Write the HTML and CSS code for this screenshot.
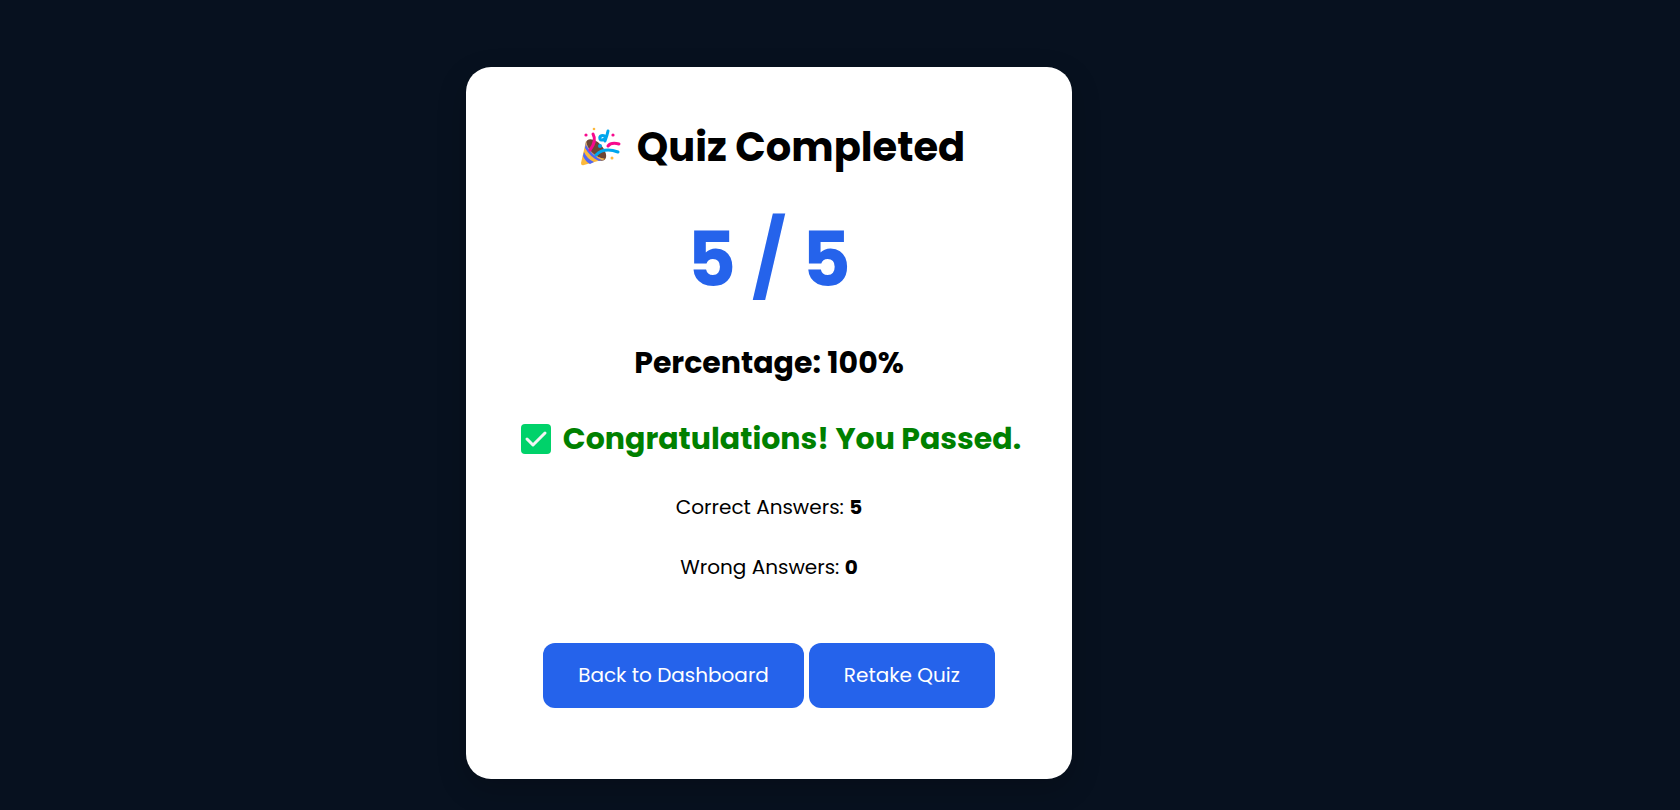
FILE: index.html
```html
<!DOCTYPE html>
<html lang="en">
<head>
  <meta charset="UTF-8" />
  <meta name="viewport" content="width=device-width, initial-scale=1.0" />
  <title>Quiz Result</title>
  <link rel="stylesheet" href="styles.css">
</head>
<body>
  <main class="result-card">
    <h1>
      <svg class="icon-party" viewBox="0 0 40 40" aria-hidden="true">
        <ellipse cx="15" cy="23" rx="13" ry="7" transform="rotate(48 15 23)" fill="#6d4534" />
        <path d="M5 14 L0 36 Q0 39 3 38 L24 32 C15 31 6 23 5 14Z" fill="#fcb93c" />
        <path d="M5 15 L4 21 Q9 30 18 34 L23 32 C15 31 7 23 5 15Z" fill="#4f66f5" />
        <path d="M5 15 L5 18 Q11 29 21 33 L24 32 C15 31 7 24 5 15Z" fill="#fcb93c" />
        <path d="M3 25 Q6 32 13 35 L9 37 Q4 34 2 29Z" fill="#4f66f5" />
        <path d="M12 7 Q16 14 9 23" class="streamer pink" />
        <path d="M27 4 Q26 9 24 14 M25 10 C22 7 18 9 19 12 C20 14 24 13 25 9" class="streamer blue" />
        <path d="M27 19 Q30 15 38 17" class="streamer pink" />
        <path d="M15 28 Q23 20 37 25" class="streamer blue" />
        <circle cx="19" cy="19" r="2" fill="#00a6ed" />
        <circle cx="5" cy="8" r="1.6" fill="#f70a8d" />
        <circle cx="32" cy="8" r="1.6" fill="#f70a8d" />
        <circle cx="13" cy="2" r="1.3" fill="#fcb93c" />
        <circle cx="31" cy="31" r="1.5" fill="#fcb93c" />
      </svg>
      Quiz Completed
    </h1>

    <div class="score">5 / 5</div>

    <h2>Percentage: 100%</h2>

    <h2 class="pass">
      <svg class="icon-check" viewBox="0 0 30 30" aria-hidden="true">
        <rect width="30" height="30" rx="4" fill="#00d26a" />
        <path d="M6 15 L12 21 L24 9" />
      </svg>
      Congratulations! You Passed.
    </h2>

    <p>Correct Answers: <b>5</b></p>
    <p>Wrong Answers: <b>0</b></p>

    <div class="actions">
      <a href="#dashboard" class="btn">Back to Dashboard</a>
      <a href="#quiz" class="btn">Retake Quiz</a>
    </div>
  </main>
</body>
</html>
```
FILE: styles.css
```css
* {
  margin: 0;
  padding: 0;
  box-sizing: border-box;
}

body {
  font-family: Poppins, Inter, sans-serif;
  background: #07111f;
  color: #000;
  min-height: 100vh;
  padding: 67px 142px 31px 0;
}

.result-card {
  width: 606px;
  max-width: 100%;
  margin: 0 auto;
  padding: 50px 40px 71px;
  background: #fff;
  border-radius: 25px;
  box-shadow: 0 10px 30px rgba(0, 0, 0, 0.2);
  text-align: center;
}

h1,
h2 {
  display: flex;
  align-items: center;
  justify-content: center;
}

h1 {
  gap: 16px;
  font-size: 40px;
  line-height: 60px;
}

h2 {
  font-size: 30px;
  line-height: 46px;
  margin-bottom: 30px;
}

.score {
  font-size: 75px;
  font-weight: 700;
  line-height: 112px;
  margin: 27px 0 24px;
  color: #2563eb;
}

.pass {
  gap: 12px;
  color: green;
}

p {
  font-size: 20px;
  line-height: 30px;
  margin-bottom: 30px;
}

.icon-party {
  width: 40px;
  height: 40px;
  margin-left: 8px;
}

.icon-check {
  width: 30px;
  height: 30px;
  margin-left: 4px;
}

.icon-check path {
  fill: none;
  stroke: #f4f4f4;
  stroke-width: 3;
  stroke-linecap: round;
  stroke-linejoin: round;
}

.streamer {
  fill: none;
  stroke-width: 3;
  stroke-linecap: round;
}

.pink {
  stroke: #f70a8d;
}

.blue {
  stroke: #00a6ed;
}

.actions {
  display: flex;
  flex-wrap: wrap;
  justify-content: center;
  gap: 5px;
  margin-top: 61px;
}

.btn {
  padding: 17px 35px;
  font-size: 20px;
  line-height: 31px;
  color: #fff;
  background: #2563eb;
  border-radius: 12px;
  text-decoration: none;
}

.btn:hover {
  background: #1d4ed8;
}
```
